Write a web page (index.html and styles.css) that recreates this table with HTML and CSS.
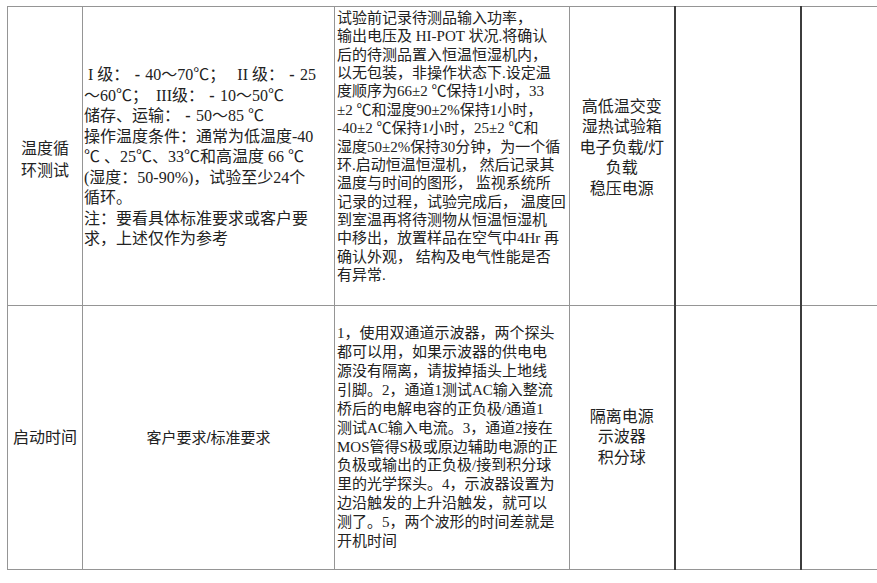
FILE: index.html
```html
<!DOCTYPE html>
<html lang="zh-CN">
<head>
<meta charset="utf-8">
<title>测试项目表</title>
<link rel="stylesheet" href="styles.css">
</head>
<body>
<div class="sheet">
<table class="grid">
  <colgroup>
    <col class="c1"><col class="c2"><col class="c3"><col class="c4"><col class="c5"><col class="c6">
  </colgroup>
  <tr class="r1">
    <td class="name name-top">温度循<br>环测试</td>
    <td class="req">&nbsp;I 级：<span class="minus">-</span>40～70℃；&nbsp;&nbsp; II 级：<span class="minus">-</span>25<br>～60℃；&nbsp; III级：<span class="minus">-</span>10～50℃<br>储存、运输：<span class="minus">-</span>50～85 ℃<br>操作温度条件：通常为低温度-40<br>℃ 、25℃、33℃和高温度 66 ℃<br>(湿度：50-90%)，试验至少24个<br>循环。<br>注：要看具体标准要求或客户要<br>求，上述仅作为参考</td>
    <td class="method method-top">试验前记录待测品输入功率，<br>输出电压及 HI-POT 状况.将确认<br>后的待测品置入恒温恒湿机内，<br>以无包装，非操作状态下.设定温<br>度顺序为66±2 ℃保持1小时，33<br>±2 ℃和湿度90±2%保持1小时，<br>-40±2 ℃保持1小时，25±2 ℃和<br>湿度50±2%保持30分钟，为一个循<br>环.启动恒温恒湿机， 然后记录其<br>温度与时间的图形， 监视系统所<br>记录的过程，试验完成后， 温度回<br>到室温再将待测物从恒温恒湿机<br>中移出，放置样品在空气中4Hr 再<br>确认外观， 结构及电气性能是否<br>有异常.</td>
    <td class="equip equip-top dark">高低温交变<br>湿热试验箱<br>电子负载/灯<br>负载<br>稳压电源</td>
    <td class="blank dark"></td>
    <td class="blank"></td>
  </tr>
  <tr class="r2">
    <td class="name">启动时间</td>
    <td class="req-center">客户要求/标准要求</td>
    <td class="method method-bottom">1，使用双通道示波器，两个探头<br>都可以用，如果示波器的供电电<br>源没有隔离，请拔掉插头上地线<br>引脚。2，通道1测试AC输入整流<br>桥后的电解电容的正负极/通道1<br>测试AC输入电流。3，通道2接在<br>MOS管得S极或原边辅助电源的正<br>负极或输出的正负极/接到积分球<br>里的光学探头。4，示波器设置为<br>边沿触发的上升沿触发，就可以<br>测了。5，两个波形的时间差就是<br>开机时间</td>
    <td class="equip dark">隔离电源<br>示波器<br>积分球</td>
    <td class="blank dark"></td>
    <td class="blank"></td>
  </tr>
</table>
</div>
</body>
</html>
```
FILE: styles.css
```css
html, body {
  margin: 0;
  padding: 0;
  background: #ffffff;
  overflow: hidden;
}

.sheet {
  padding: 6px 0 0 7px;
  width: 960px;
}

.grid {
  border-collapse: collapse;
  table-layout: fixed;
  width: 923px;
  color: #222222;
}

.c1 { width: 75px; }
.c2 { width: 252px; }
.c3 { width: 235px; }
.c4 { width: 105px; }
.c5 { width: 126px; }
.c6 { width: 130px; }

.grid td {
  border: 1px solid #959595;
  padding: 0;
  vertical-align: middle;
  white-space: nowrap;
  overflow: hidden;
}

.r1 { height: 299px; }
.r2 { height: 264px; }

.name {
  font-family: "Liberation Sans", "Noto Sans CJK SC", sans-serif;
  font-size: 16px;
  line-height: 22px;
  text-align: center;
}

.name-top {
  padding-top: 7px !important;
}

.req {
  font-family: "Liberation Serif", "Noto Sans CJK SC", serif;
  font-size: 16px;
  line-height: 20.5px;
  text-align: left;
  padding: 3px 0 0 1px !important;
}

.minus {
  display: inline-block;
  width: 1em;
  text-align: center;
  font-weight: bold;
}

.req-center {
  font-family: "Liberation Sans", "Noto Sans CJK SC", sans-serif;
  font-size: 15px;
  line-height: 20px;
  text-align: center;
}

.method {
  font-family: "Liberation Serif", "Noto Sans CJK SC", serif;
  font-size: 15px;
  text-align: left;
  padding-left: 2px !important;
}

.method-top {
  line-height: 18.36px;
  vertical-align: top !important;
  padding-top: 2px !important;
}

.method-bottom {
  line-height: 18.9px;
}

.equip {
  font-family: "Liberation Sans", "Noto Sans CJK SC", sans-serif;
  font-size: 16px;
  line-height: 20.6px;
  text-align: center;
}

.equip-top {
  padding-bottom: 16px !important;
}

.grid td.dark {
  border-right: 2px solid #3c3c3c;
}
```
